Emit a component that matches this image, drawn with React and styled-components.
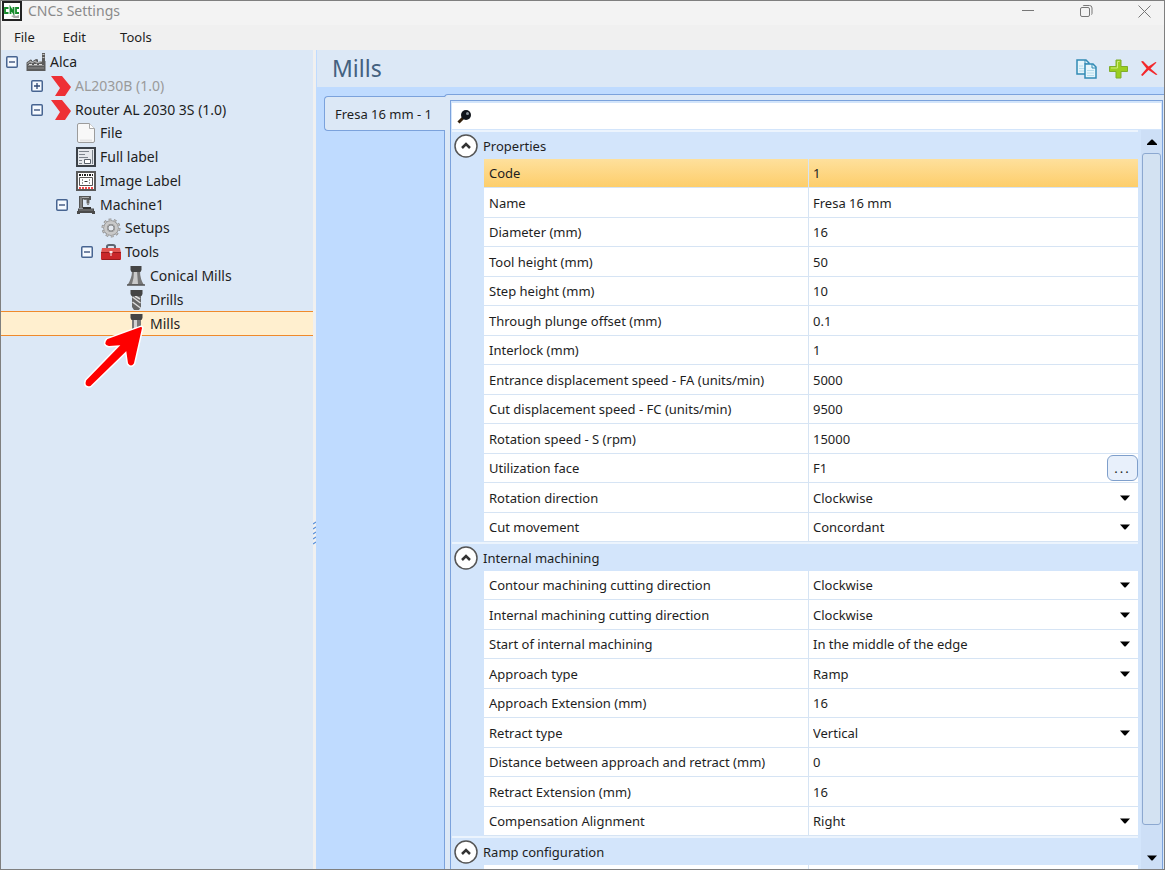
import React, { useState } from "react";
import styled, { createGlobalStyle, css } from "styled-components";

const GlobalStyle = createGlobalStyle`
  *, *::before, *::after { box-sizing: border-box; }
  body {
    margin: 0;
    background: #fff;
    color: #1e1e1e;
    font-family: "Noto Sans", "Open Sans", sans-serif;
    font-size: 13px;
  }
  button, input, select {
    margin: 0;
    padding: 0;
    border: 0;
    background: none;
    color: inherit;
    font: inherit;
  }
  svg { display: block; flex: none; }
`;

const Window = styled.div`
  display: flex;
  flex-direction: column;
  height: calc(100vh - 6px);
  margin-right: 3px;
  border: 1px solid #7f7f7f;
  overflow: hidden;
  background: #f0f0f0;
`;

const TitleBar = styled.header`
  display: flex;
  align-items: center;
  flex: none;
  height: 24px;
  padding: 0 13px 4px 1px;
  gap: 6px;
  background: #f3f3f3;
  color: #8a8a8a;
`;

const AppTitle = styled.h1`
  flex: 1;
  margin: 0;
  font-size: 14px;
  line-height: 18px;
  font-weight: 400;
`;

const WindowButtons = styled.div`
  display: flex;
  gap: 45px;
`;

const IconButton = styled.button`
  display: flex;
  align-items: center;
  justify-content: center;
`;

const MenuBar = styled.nav`
  display: flex;
  align-items: center;
  flex: none;
  height: 25px;
  padding: 0 0 2px 13px;
  gap: 28px;
`;

const MenuButton = styled.button`
  font-size: 13px;
  line-height: 20px;
  &:last-child { margin-left: 6px; }
`;

const Workspace = styled.div`
  display: flex;
  flex: 1;
  min-height: 0;
`;

const Sidebar = styled.aside`
  position: relative;
  flex: none;
  width: 312px;
  background: #dce8f6;
`;

const Tree = styled.ul`
  margin: 0;
  padding: 0;
  list-style: none;
`;

const TreeRow = styled.li`
  display: flex;
  align-items: center;
  height: 24px;
  padding-left: ${(p) => 5 + p.$level * 25}px;
  color: ${(p) => (p.$muted ? "#9a9a9a" : "inherit")};
  font-size: 14px;
  line-height: 18px;
  white-space: nowrap;
  &:nth-child(4n + 3) { height: 23px; }
  ${(p) =>
    p.$selected &&
    css`
      height: 25px;
      border: solid #ef8a2b;
      border-width: 1px 0;
      background: #ffefcf;
    `}
`;

const ExpanderSlot = styled.span`
  width: 20px;
`;

const Expander = styled.button`
  display: block;
`;

const NodeIcon = styled.span`
  display: flex;
  justify-content: center;
  width: 20px;
  margin-right: 4px;
`;

const PointerArrow = styled.svg`
  position: absolute;
  left: 81px;
  top: 273px;
`;

const Splitter = styled.div`
  display: flex;
  align-items: center;
  flex: none;
  width: 3px;
  padding-top: 146px;
  background: #f0f0f0;
`;

const Main = styled.main`
  display: flex;
  flex-direction: column;
  flex: 1;
  min-width: 0;
  background: #bfdbff;
`;

const PageHeader = styled.div`
  display: flex;
  align-items: center;
  justify-content: space-between;
  flex: none;
  height: 37px;
  margin-left: 1px;
  padding: 0 6px 0 15px;
  background: #dce8f6;
`;

const PageTitle = styled.h2`
  margin: 0;
  padding-bottom: 2px;
  color: #44617f;
  font-size: 23px;
  line-height: 28px;
  font-weight: 400;
`;

const Actions = styled.div`
  display: flex;
  align-items: center;
  gap: 12px;
`;

const TabArea = styled.div`
  display: flex;
  align-items: flex-start;
  flex: 1;
  min-height: 0;
  padding: 7px 0 0 8px;
`;

const Tab = styled.button`
  position: relative;
  z-index: 1;
  flex: none;
  width: 121px;
  height: 35px;
  margin: 2px -1px 0 0;
  padding-right: 3px;
  border: 1px solid #7ba2dc;
  border-right: 0;
  border-radius: 4px 0 0 4px;
  background: #dce8f6;
  white-space: nowrap;
`;

const TabPane = styled.div`
  display: flex;
  flex: 1;
  align-self: stretch;
  min-width: 0;
  padding: 5px 1px 0 5px;
  border: solid #7ba2dc;
  border-width: 1px 0 0 1px;
  border-radius: 4px 0 0 0;
  background: #dce8f6;
`;

const Inspector = styled.div`
  display: flex;
  flex-direction: column;
  flex: 1;
  min-width: 0;
  border: 1px solid #7ba2dc;
  border-bottom: 0;
  background: #d3e5fb;
`;

const SearchBox = styled.label`
  display: flex;
  align-items: center;
  flex: none;
  gap: 6px;
  height: 26px;
  margin: 2px 1px 1px;
  padding-left: 5px;
  background: #fff;
`;

const SearchInput = styled.input`
  flex: 1;
  outline: 0;
`;

const Scroller = styled.div`
  display: flex;
  flex: 1;
  min-height: 0;
`;

const Groups = styled.div`
  flex: 1;
  min-width: 0;
  height: 100%;
  padding: 0 3px 0 1px;
  overflow: hidden;
`;

const Group = styled.section`
  border-top: 2px solid #ecf4fd;
`;

const GroupHeader = styled.div`
  display: flex;
  align-items: center;
  height: 27px;
  padding-left: 2px;
  gap: 5px;
`;

const GroupTitle = styled.h3`
  margin: 0;
  font-size: 13px;
  font-weight: 400;
`;

const GroupBody = styled.div`
  padding-left: 32px;
`;

const PropertyTable = styled.table`
  width: 100%;
  border-collapse: separate;
  border-spacing: 0;
  table-layout: fixed;
`;

const cell = css`
  height: 100%;
  padding: 0 0 0 5px;
  border-bottom: 1px solid #d6e4f4;
`;

const LabelCell = styled.th`
  ${cell}
  width: 325px;
  border-right: 1px solid #d6e4f4;
  font-weight: 400;
  text-align: left;
  white-space: nowrap;
`;

const ValueCell = styled.td`
  ${cell}
  padding-left: 4px;
`;

const PropertyRow = styled.tr`
  height: 29px;
  background: #fff;
  &:nth-child(even) { height: 30px; }
  ${(p) =>
    p.$selected &&
    css`
      background: linear-gradient(#fee09c, #fdcd69);
    `}
`;

const ValueWrap = styled.div`
  display: flex;
  align-items: center;
  height: 27px;
  ${(p) => p.$dropdown && css`padding-right: 8px;`}
`;

const ValueInput = styled.input`
  flex: 1;
  min-width: 0;
  line-height: 18px;
  outline: 0;
`;

const ValueSelect = styled.select`
  flex: 1;
  min-width: 0;
  line-height: 18px;
  appearance: none;
  outline: 0;
`;

const BrowseButton = styled.button`
  width: 31px;
  height: 26px;
  border: 1px solid #7f9fcb;
  border-radius: 6px;
  background: #e8f0fb;
  letter-spacing: 2px;
`;

const ScrollBar = styled.div`
  display: flex;
  flex-direction: column;
  align-items: center;
  flex: none;
  width: 21px;
  padding: 9px 1px 8px;
  gap: 7px;
  background: #cddff6;
`;

const Thumb = styled.div`
  flex: 1;
  width: 19px;
  margin: 1px 0 23px;
  border: 1px solid #8ca8d0;
  border-radius: 3px;
  background: #d3e2f2;
`;

const ICONS = {
  factory: (
    <svg width="20" height="20" viewBox="0 0 20 20">
      <path d="M16 1h3v8h.5v10H.5v-8.500l4-3 1.500.5v1.500l4-2.500 2 .5V10l4-1z" fill="#5c5c5c" />
      <path d="M1.500 11.500L5 9v2l5-2v2l6-1.500" fill="none" stroke="#b9b9b9" />
      <path d="M2 13.500h16M2 16h16" stroke="#8f8f8f" />
      <path d="M3 12.500h3M8 12.500h3M13 12.500h3" stroke="#dcdcdc" />
      <path d="M16.500 2.500h2M16.500 5.500h2" stroke="#c4c4c4" />
    </svg>
  ),
  chevron: (
    <svg width="20" height="20" viewBox="0 0 20 20">
      <path d="M0 0h11l9 11-6 9H4l5-8z" fill="#ee3035" />
    </svg>
  ),
  file: (
    <svg width="18" height="20" viewBox="0 0 18 20">
      <path d="M.5 2Q.5.500 2 .5h10.500l5 5V18q0 1.500-1.500 1.500H2Q.5 19.500.5 18z" fill="#f8f8f8" stroke="#9c9c9c" />
      <path d="M12.500.5V5.500h5" fill="#fff" stroke="#aaa" />
      <path d="M3 17.500h12" stroke="#e5e5e5" strokeWidth="2" />
    </svg>
  ),
  fullLabel: (
    <svg width="20" height="20" viewBox="0 0 20 20">
      <path d="M1 1h18v18H1z" fill="#e6e9ed" stroke="#3b4148" strokeWidth="2" />
      <path d="M3 4.500h10M3 7.500h6M3 10.500h9M3 13.500h3M3 16.500h3" stroke="#7d848c" />
      <path d="M8.500 12.500h6v4h-6z" fill="#fff" stroke="#59616a" />
      <path d="M16.500 3v14" stroke="#7d848c" />
    </svg>
  ),
  imageLabel: (
    <svg width="20" height="20" viewBox="0 0 20 20">
      <path d="M1 1h18v18H1z" fill="#fff" stroke="#5a5a5a" strokeWidth="2" />
      <path d="M3 4h14" stroke="#222" strokeWidth="2" strokeDasharray="2 1 1 1" />
      <path d="M3.500 6.500h13v8h-13z" fill="#fff" stroke="#555" />
      <path d="M6 9h1M6 12h1M13 9h1M13 12h1M8.500 10.500h3" stroke="#333" />
      <path d="M3 17h14" stroke="#f04a4a" strokeWidth="2" strokeDasharray="2 1" />
    </svg>
  ),
  machine: (
    <svg width="18" height="18" viewBox="0 0 18 18">
      <path d="M1 12.500h16V15h1v3h-3v-1H3v1H0v-3h1z" fill="#4a4a4a" />
      <path d="M2 0h12v4h-2v3h-2V3H6v9H2z" fill="#555" />
      <path d="M4 1v11M5 1.500h7" stroke="#a9a9a9" />
      <path d="M6.500 3.500H10V7l1 2 1-2V4" fill="none" stroke="#777" />
      <path d="M2 14h14" stroke="#808080" />
      <path d="M6 12h8" stroke="#333" strokeWidth="2" />
    </svg>
  ),
  gear: (
    <svg width="20" height="20" viewBox="0 0 20 20">
      <circle cx="10" cy="10" r="8" fill="none" stroke="#909090" strokeWidth="3" strokeDasharray="2.600 2.430" />
      <circle cx="10" cy="10" r="5.500" fill="none" stroke="#8c8c8c" strokeWidth="4.500" />
      <circle cx="10" cy="10" r="5.500" fill="none" stroke="#c9c9c9" strokeWidth="3" />
      <circle cx="10" cy="10" r="8" fill="none" stroke="#c4c4c4" strokeWidth="1.500" strokeDasharray="1.600 3.430" strokeDashoffset="-.5" />
      <circle cx="10" cy="10" r="3" fill="#e4e9f0" stroke="#8c8c8c" />
    </svg>
  ),
  toolbox: (
    <svg width="20" height="18" viewBox="0 0 20 18">
      <path d="M6 6V3.500Q6 2 8 2h4q2 0 2 1.500V6" fill="none" stroke="#5d6570" strokeWidth="2" />
      <path d="M1 5h18l1 5H0z" fill="#e25652" />
      <path d="M0 9h20v7q0 1-1 1H1q-1 0-1-1z" fill="#c9272a" />
      <path d="M0 9.500h20M1 16.500h18" stroke="#981a1d" />
      <path d="M8.500 8h3v2h-1v3h-1v-3h-1z" fill="#f5eeee" />
    </svg>
  ),
  cone: (
    <svg width="20" height="20" viewBox="0 0 20 20">
      <path d="M6 5h8q0 8 4 14H1.500Q6 12 6 5z" fill="#777" />
      <path d="M8 5h3l1 13H6Q8 12 8 5z" fill="#c9c9c9" />
      <path d="M4.500 0h11v4l-1 2h-9l-1-2z" fill="#444" />
      <path d="M1 19h18" stroke="#555" strokeWidth="1.500" />
    </svg>
  ),
  drill: (
    <svg width="20" height="20" viewBox="0 0 20 20">
      <path d="M6 5h9v12l-2 3H8l-2-3z" fill="#666" />
      <path d="M6.500 7l8 6M6.500 12l8 6M9 6l5 3" stroke="#ddd" strokeWidth="1.500" />
      <path d="M4.500 0h12v4l-1 2h-10l-1-2z" fill="#444" />
    </svg>
  ),
  mill: (
    <svg width="20" height="20" viewBox="0 0 20 20">
      <path d="M6 5h9v14H6z" fill="#777" />
      <path d="M8 5h3v14H8z" fill="#d2d2d2" />
      <path d="M4.500 0h12v4l-1 2h-10l-1-2z" fill="#444" />
    </svg>
  ),
};

function ExpanderIcon({ open }) {
  return (
    <svg width="12" height="12" viewBox="0 0 12 12">
      <rect x=".75" y=".75" width="10.500" height="10.500" rx="1" fill="#f5f9fe" stroke="#476491" strokeWidth="1.500" />
      <path d={open ? "M3 6h6" : "M3 6h6M6 3v6"} stroke="#2f4875" strokeWidth="1.300" />
    </svg>
  );
}

function DownArrow() {
  return (
    <svg width="10" height="6" viewBox="0 0 10 6">
      <path d="M0 .5h10L5.500 5.500h-1z" fill="#000" />
    </svg>
  );
}

const POINTER_PATH =
  "M59 5L26 17Q22 21 27 22L41 21L5 58Q3 63 8 62L45 26L47 40Q49 43 51 40Z";

const NODES = [
  { label: "Alca", level: 0, icon: "factory", open: true },
  { label: "AL2030B (1.0)", level: 1, icon: "chevron", open: false, muted: true },
  { label: "Router AL 2030 3S (1.0)", level: 1, icon: "chevron", open: true },
  { label: "File", level: 2, icon: "file" },
  { label: "Full label", level: 2, icon: "fullLabel" },
  { label: "Image Label", level: 2, icon: "imageLabel" },
  { label: "Machine1", level: 2, icon: "machine", open: true },
  { label: "Setups", level: 3, icon: "gear" },
  { label: "Tools", level: 3, icon: "toolbox", open: true },
  { label: "Conical Mills", level: 4, icon: "cone" },
  { label: "Drills", level: 4, icon: "drill" },
  { label: "Mills", level: 4, icon: "mill", selected: true },
];

const GROUPS = [
  {
    title: "Properties",
    rows: [
      { label: "Code", value: "1", selected: true },
      { label: "Name", value: "Fresa 16 mm" },
      { label: "Diameter (mm)", value: "16" },
      { label: "Tool height (mm)", value: "50" },
      { label: "Step height (mm)", value: "10" },
      { label: "Through plunge offset (mm)", value: "0.1" },
      { label: "Interlock (mm)", value: "1" },
      { label: "Entrance displacement speed - FA (units/min)", value: "5000" },
      { label: "Cut displacement speed - FC (units/min)", value: "9500" },
      { label: "Rotation speed - S (rpm)", value: "15000" },
      { label: "Utilization face", value: "F1", kind: "browse" },
      { label: "Rotation direction", value: "Clockwise", kind: "select" },
      { label: "Cut movement", value: "Concordant", kind: "select" },
    ],
  },
  {
    title: "Internal machining",
    rows: [
      { label: "Contour machining cutting direction", value: "Clockwise", kind: "select" },
      { label: "Internal machining cutting direction", value: "Clockwise", kind: "select" },
      { label: "Start of internal machining", value: "In the middle of the edge", kind: "select" },
      { label: "Approach type", value: "Ramp", kind: "select" },
      { label: "Approach Extension (mm)", value: "16" },
      { label: "Retract type", value: "Vertical", kind: "select" },
      { label: "Distance between approach and retract (mm)", value: "0" },
      { label: "Retract Extension (mm)", value: "16" },
      { label: "Compensation Alignment", value: "Right", kind: "select" },
    ],
  },
  { title: "Ramp configuration", rows: [{ label: "", value: "" }] },
];

function Property({ id, row }) {
  return (
    <PropertyRow $selected={row.selected}>
      <LabelCell scope="row">
        <label htmlFor={id}>{row.label}</label>
      </LabelCell>
      <ValueCell>
        <ValueWrap $dropdown={row.kind === "select"}>
          {row.kind === "select" ? (
            <>
              <ValueSelect id={id} defaultValue={row.value}>
                <option>{row.value}</option>
              </ValueSelect>
              <DownArrow />
            </>
          ) : (
            <ValueInput id={id} type="text" defaultValue={row.value} />
          )}
          {row.kind === "browse" && <BrowseButton type="button">...</BrowseButton>}
        </ValueWrap>
      </ValueCell>
    </PropertyRow>
  );
}

function PropertyGroup({ group, index }) {
  const [open, setOpen] = useState(true);
  return (
    <Group>
      <GroupHeader>
        <IconButton type="button" aria-label={`Toggle ${group.title}`} onClick={() => setOpen(!open)}>
          <svg width="24" height="24" viewBox="0 0 24 24">
            <circle cx="12" cy="12" r="11" fill="#fff" stroke="#555" strokeWidth="1.500" />
            <path d={open ? "M8 14l4-4 4 4" : "M8 10l4 4 4-4"} fill="none" stroke="#333" strokeWidth="2.500" />
          </svg>
        </IconButton>
        <GroupTitle>{group.title}</GroupTitle>
      </GroupHeader>
      {open && (
        <GroupBody>
          <PropertyTable>
            <tbody>
              {group.rows.map((row, i) => (
                <Property key={i} id={`property-${index}-${i}`} row={row} />
              ))}
            </tbody>
          </PropertyTable>
        </GroupBody>
      )}
    </Group>
  );
}

export default function App() {
  return (
    <Window>
      <GlobalStyle />
      <TitleBar>
        <svg width="20" height="20" viewBox="0 0 20 20">
          <path d="M1 1h18v18H1z" fill="#fff" stroke="#222" strokeWidth="2" />
          <path d="M6.500 7H3v5h3.500M8.500 13V7l3 5V6M17 7h-3v5h3" fill="none" stroke="#158a2b" strokeWidth="1.800" />
          <path d="M9 15l3-1 2 1 3-1v3h-5z" fill="#aaa" />
        </svg>
        <AppTitle>CNCs Settings</AppTitle>
        <WindowButtons>
          <IconButton type="button" aria-label="Minimize">
            <svg width="13" height="13" viewBox="0 0 13 13"><path d="M0 5.500h12" stroke="#777" /></svg>
          </IconButton>
          <IconButton type="button" aria-label="Restore">
            <svg width="13" height="13" viewBox="0 0 13 13" fill="none" stroke="#777">
              <rect x=".5" y="2.500" width="9" height="9" rx="1.500" />
              <path d="M3 1Q3 .5 4 .5h5.500q2.500 0 2.500 2.500v5.500q0 1-.7 1" />
            </svg>
          </IconButton>
          <IconButton type="button" aria-label="Close">
            <svg width="13" height="13" viewBox="0 0 13 13"><path d="M.5.500l12 12M12.500.5l-12 12" stroke="#777" /></svg>
          </IconButton>
        </WindowButtons>
      </TitleBar>
      <MenuBar>
        <MenuButton type="button">File</MenuButton>
        <MenuButton type="button">Edit</MenuButton>
        <MenuButton type="button">Tools</MenuButton>
      </MenuBar>
      <Workspace>
        <Sidebar>
          <Tree>
            {NODES.map((node, i) => (
              <TreeRow key={i} $level={node.level} $muted={node.muted} $selected={node.selected}>
                <ExpanderSlot>
                  {node.open !== undefined && (
                    <Expander type="button" aria-label={`Toggle ${node.label}`}>
                      <ExpanderIcon open={node.open} />
                    </Expander>
                  )}
                </ExpanderSlot>
                <NodeIcon>{ICONS[node.icon]}</NodeIcon>
                <span>{node.label}</span>
              </TreeRow>
            ))}
          </Tree>
          <PointerArrow width="64" height="68" viewBox="0 0 64 68" strokeLinejoin="round">
            <path d={POINTER_PATH} fill="#fff" stroke="#fff" strokeWidth="5" />
            <path d={POINTER_PATH} fill="#fe0000" stroke="#fe0000" strokeWidth="2" />
          </PointerArrow>
        </Sidebar>
        <Splitter>
          <svg width="3" height="24" viewBox="0 0 3 24">
            <path d="M0 3l3-2M0 8l3-2M0 13l3-2M0 18l3-2M0 23l3-2" stroke="#5b92dc" strokeWidth="1.300" />
          </svg>
        </Splitter>
        <Main>
          <PageHeader>
            <PageTitle>Mills</PageTitle>
            <Actions>
              <IconButton type="button" aria-label="Copy">
                <svg width="21" height="20" viewBox="0 0 21 20">
                  <path d="M1 1h9l3 3v11H1z" fill="#e6f5fb" stroke="#328bb5" strokeWidth="1.500" />
                  <path d="M9 1v4h4" fill="none" stroke="#328bb5" />
                  <path d="M3 7h4M3 9.500h6M3 12h6" stroke="#b5dcec" />
                  <path d="M9 5h8l3 3v11H9z" fill="#e6f5fb" stroke="#328bb5" strokeWidth="1.500" />
                  <path d="M16 5v4h4" fill="none" stroke="#328bb5" />
                  <path d="M11 11.500h7M11 14h7M11 16.500h7" stroke="#b5dcec" />
                </svg>
              </IconButton>
              <IconButton type="button" aria-label="Add">
                <svg width="19" height="20" viewBox="0 0 19 20">
                  <path d="M7 1h5v6.500h6.500v5H12V19H7v-6.500H.5v-5H7z" fill="#9bce21" stroke="#7fae2a" />
                  <path d="M8.500 2.500h2M8.500 2.500V9H2" fill="none" stroke="#d0ec7d" />
                </svg>
              </IconButton>
              <IconButton type="button" aria-label="Delete">
                <svg width="18" height="16" viewBox="0 0 18 16">
                  <path d="M1 .5l2-.5 5.500 5.500L15.500 1l1 .5L10.500 7.500l7 6-1.500.5-7.500-5L2.500 15 1 14l5.500-6.500z" fill="#f3282c" />
                </svg>
              </IconButton>
            </Actions>
          </PageHeader>
          <TabArea>
            <Tab type="button">Fresa 16 mm - 1</Tab>
            <TabPane>
              <Inspector>
                <SearchBox>
                  <svg width="15" height="15" viewBox="0 0 15 15">
                    <path d="M1.500 13.500L6 9" stroke="#33200c" strokeWidth="3" />
                    <circle cx="9" cy="6" r="5" fill="#11151b" />
                    <circle cx="10.500" cy="4.500" r="1.500" fill="#8e979f" />
                  </svg>
                  <SearchInput type="text" aria-label="Search properties" />
                </SearchBox>
                <Scroller>
                  <Groups>
                    {GROUPS.map((group, i) => (
                      <PropertyGroup key={group.title} group={group} index={i} />
                    ))}
                  </Groups>
                  <ScrollBar>
                    <svg width="10" height="6" viewBox="0 0 10 6"><path d="M4.500.5h1L10 5v1H0V5z" /></svg>
                    <Thumb />
                    <DownArrow />
                  </ScrollBar>
                </Scroller>
              </Inspector>
            </TabPane>
          </TabArea>
        </Main>
      </Workspace>
    </Window>
  );
}
